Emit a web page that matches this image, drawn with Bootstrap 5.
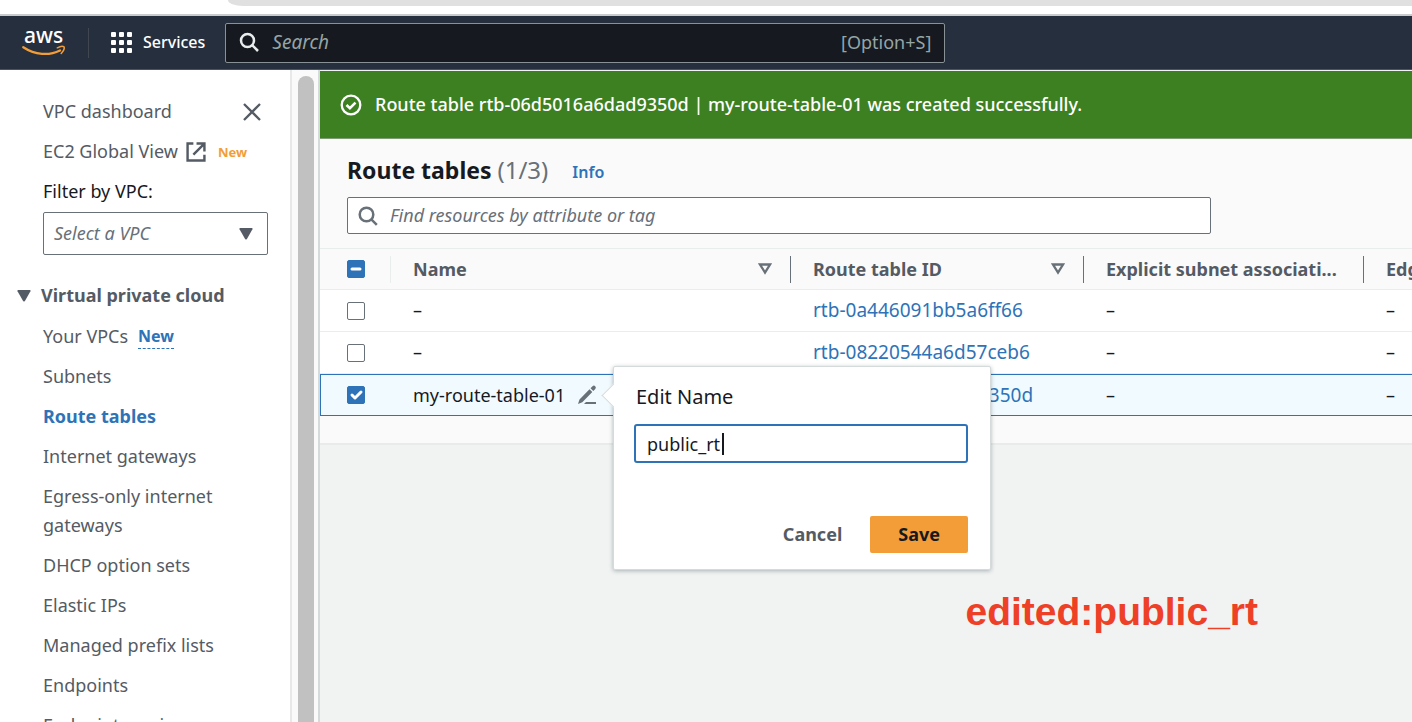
<!DOCTYPE html>
<html lang="en">
<head>
<meta charset="utf-8">
<meta name="viewport" content="width=device-width, initial-scale=1">
<title>Route tables | VPC Console</title>
<link href="https://cdn.jsdelivr.net/npm/bootstrap@5.3.0/dist/css/bootstrap.min.css" rel="stylesheet">
<style>
  :root {
    --ink: #16191f;
    --slate: #545b64;
    --muted: #687078;
    --link: #2e73b8;
    --line: #eaeded;
    --pale: #fafafa;
  }
  body { font-family: "Noto Sans", "Open Sans", sans-serif; font-size: 18px; line-height: 29px; color: var(--ink); background: #fff; }
  a { text-decoration: none; color: var(--link); }
  svg { flex: none; display: block; }
  ::placeholder { font-style: italic; }

  /* Browser toolbar above the page */
  .browser-strip { height: 16px; border-bottom: 2px solid #c9cbcd; padding-left: 228px; }
  .address-bar { height: 6px; background: #e0e0e0; border-bottom-left-radius: 20px 8px; }

  /* Console header */
  .console-nav { height: 54px; background: #252f3e; border-bottom: 1px solid #4a545f; padding: 0 22px; }
  .nav-rule { width: 1px; height: 30px; background: #414750; margin: 0 22px; }
  .services-btn { font-size: 16px; font-weight: 500; color: #fff; gap: 10px; }
  .global-search { width: 720px; height: 40px; margin-left: 20px; padding: 0 13px; background: #16191f; border: 1px solid #879196; border-radius: 2px; }
  .global-search input { font-size: 19px; color: #fff; margin-left: 12px; }
  .global-search input::placeholder { color: #95a5a6; opacity: 1; }
  .global-search .hint { color: #95a5a6; }
  .bare-input { border: 0; outline: 0; background: transparent; padding: 0; min-width: 0; }

  /* Side navigation */
  .side-nav { width: 292px; border-right: 2px solid #e7e8e8; padding: 27px 22px 0 43px; }
  .side-nav a, .side-nav .group-title { color: var(--slate); }
  .side-nav .side-links { display: flex; flex-direction: column; gap: 11px; }
  .side-nav a.current { color: var(--link); font-weight: 700; }
  .new-tag { font-size: 13px; font-weight: 700; line-height: 27px; color: #f29d38; margin-left: 12px; padding-top: 2px; }
  .close-btn { margin-right: 6px; }
  .side-nav a.new-link { font-size: 16px; font-weight: 700; line-height: 24px; color: var(--link); border-bottom: 1px dashed var(--link); margin-left: 10px; }
  .vpc-field { margin-top: 6px; }
  .vpc-select { height: 43px; font-style: italic; color: var(--muted); border: 1px solid var(--muted); border-radius: 2px; padding: 0 10px; background: #fff; appearance: none; }
  .select-arrow { position: absolute; right: 15px; top: 16px; pointer-events: none; }
  .group-title { font-weight: 700; margin: 26px 0 12px -26px; gap: 10px; }

  .scroll-track { width: 28px; background: var(--pale); border-right: 2px solid #d5dbdb; padding: 6px 4px 0 6px; }
  .scroll-thumb { height: 100%; background: #c1c1c1; border-radius: 8px 8px 0 0; }

  /* Main pane */
  .main-pane { background: #f1f3f3; padding-top: 1px; }
  .flash { height: 68px; background: #3d8022; color: #fff; font-weight: 500; padding: 0 20px; gap: 13px; border-bottom: 1px solid #7d9c74; }
  .table-panel { background: var(--pale); padding-bottom: 27px; border-bottom: 2px solid #e9ebeb; }
  .panel-head { padding: 16px 27px 14px; }
  .panel-head h1 { font-size: 23px; font-weight: 700; line-height: 30px; margin: 0; }
  .panel-head h1 span { font-size: 24px; line-height: 26px; font-weight: 400; color: var(--muted); }
  .info-link { font-size: 16px; font-weight: 600; margin-left: 24px; padding-top: 4px; }
  .title-row { height: 30px; }
  .resource-search { max-width: 864px; height: 37px; margin-top: 12px; padding: 0 10px; gap: 12px; background: #fff; border: 1px solid var(--muted); border-radius: 2px; }
  .resource-search ::placeholder { color: var(--muted); opacity: 1; }

  .route-table { width: 1371px; table-layout: fixed; border-collapse: separate; border-spacing: 0; }
  .route-table th { height: 42px; padding: 0; border-top: 1px solid var(--line); border-bottom: 1px solid var(--line); color: var(--slate); font-weight: 700; }
  .route-table td { height: 42px; padding: 0 22px; background: #fff; border-bottom: 1px solid var(--line); font-size: 18px; }
  .route-table td:first-child, .route-table th:first-child { padding-left: 27px; }
  .col-head { height: 27px; padding: 0 18px 0 22px; border-right: 1px solid var(--muted); }
  .col-head.faint { border-color: var(--line); }
  .route-table .picked td { height: 42px; background: #f1faff; border-top: 1px solid var(--link); border-bottom: 1px solid var(--link); }
  .route-table .picked td:first-child { border-left: 1px solid var(--link); padding-left: 26px; }
  .route-table td.id-cell { font-size: 19px; }
  .tick { width: 18px; height: 18px; margin: 0; border: 1px solid var(--muted); display: block; }
  .tick.form-check-input { border-radius: 2px; }
  .tick.form-check-input:checked, .tick.form-check-input:indeterminate { background-color: var(--link); border-color: var(--link); background-size: 20px 20px; }

  /* Inline edit popover */
  .name-cell { gap: 12px; }
  .edit-pop { left: 222px; top: -9px; width: 378px; height: 204px; padding: 16px 22px 16px 20px; background: #fff; border: 1px solid #d5dbdb; border-radius: 2px; box-shadow: 0 1px 4px rgba(0, 28, 36, .3); z-index: 2; }
  .edit-pop::before { content: ""; position: absolute; left: -9px; top: 20px; width: 17px; height: 17px; background: #fff; border: solid #d5dbdb; border-width: 0 0 1px 1px; transform: rotate(45deg); }
  .edit-pop label { font-size: 20px; line-height: 28px; padding-left: 2px; }
  .name-field { margin-top: 13px; }
  .name-input { height: 39px; padding: 0 11px; border: 2px solid var(--link); border-radius: 3px; outline: 0; color: var(--ink); font-size: 18px; }
  .text-caret { left: 88px; top: 9px; width: 2px; height: 22px; background: var(--ink); }
  .pop-btn { height: 37px; font-weight: 700; border: 0; border-radius: 2px; padding: 0 28px; background: transparent; color: var(--slate); }
  .pop-btn.save { background: #f29d38; color: var(--ink); }

  .annotation { font: 700 39px/46px "Liberation Sans", Arial, sans-serif; color: #ee4027; margin: 144px 154px 0 0; text-align: right; }
</style>
<script src="https://cdn.jsdelivr.net/npm/bootstrap@5.3.0/dist/js/bootstrap.bundle.min.js"></script>
</head>
<body class="vh-100 overflow-hidden d-flex flex-column">

<div class="browser-strip flex-shrink-0"><div class="address-bar"></div></div>

<header class="console-nav d-flex align-items-center flex-shrink-0">
  <a href="#" aria-label="AWS home">
    <svg width="44" height="30" viewBox="0 0 44 30">
      <text x="2" y="15" font-family="Noto Sans" font-size="21" font-weight="500" fill="#fff">aws</text>
      <path d="M1.300 19.200C13 27 27 28 38 22.400" fill="none" stroke="#f29d38" stroke-width="2.300" stroke-linecap="round"/>
      <path d="M35.300 19.800C38 18.300 41 18 42 18.800C42.600 20 41.500 23 39.200 25.400" fill="none" stroke="#f29d38" stroke-width="1.500" stroke-linecap="round"/>
    </svg>
  </a>
  <div class="nav-rule"></div>
  <button type="button" class="services-btn bare-input d-flex align-items-center">
    <svg width="22" height="22" viewBox="0 0 22 22" fill="#fff">
      <rect x="0" y="0" width="5" height="5" rx="1"/><rect x="8" y="0" width="5" height="5" rx="1"/><rect x="16" y="0" width="5" height="5" rx="1"/>
      <rect x="0" y="8" width="5" height="5" rx="1"/><rect x="8" y="8" width="5" height="5" rx="1"/><rect x="16" y="8" width="5" height="5" rx="1"/>
      <rect x="0" y="16" width="5" height="5" rx="1"/><rect x="8" y="16" width="5" height="5" rx="1"/><rect x="16" y="16" width="5" height="5" rx="1"/>
    </svg>
    Services
  </button>
  <div class="global-search d-flex align-items-center">
    <svg width="21" height="21" viewBox="0 0 21 21" fill="none" stroke="#eaeded" stroke-width="2.500"><circle cx="8.500" cy="8.500" r="6.500"/><path d="M13.200 13.200L19 19"/></svg>
    <input class="bare-input flex-grow-1" type="search" placeholder="Search" aria-label="Search">
    <span class="hint">[Option+S]</span>
  </div>
</header>

<div class="d-flex flex-grow-1 overflow-hidden">
  <nav class="side-nav flex-shrink-0" aria-label="VPC">
    <div class="side-links">
      <div class="d-flex align-items-center justify-content-between">
        <a href="#">VPC dashboard</a>
        <button type="button" class="bare-input close-btn" aria-label="Close navigation">
          <svg width="20" height="20" viewBox="0 0 20 20" stroke="#545b64" stroke-width="2.300"><path d="M2 2L18 18M18 2L2 18"/></svg>
        </button>
      </div>
      <div class="d-flex align-items-center">
        <a href="#" class="d-flex align-items-center">EC2 Global View
          <svg class="ms-2" width="20" height="20" viewBox="0 0 19 19" fill="none" stroke="#545b64" stroke-width="2.300"><path d="M7 1.500H1.500V17.500H17.500V12M10 1.500H17.500V9M17 2L7 12"/></svg>
        </a>
        <span class="new-tag">New</span>
      </div>
      <label for="vpc">Filter by VPC:</label>
    </div>
    <div class="position-relative vpc-field">
      <select id="vpc" class="vpc-select w-100"><option>Select a VPC</option></select>
      <svg class="select-arrow" width="14" height="12" viewBox="0 0 13 11" fill="#545b64"><path d="M1 0H12Q13 0 12.500 1L7.500 10Q6.500 11.500 5.500 10L.5 1Q0 0 1 0Z"/></svg>
    </div>
    <div class="group-title d-flex align-items-center">
      <svg width="14" height="12" viewBox="0 0 13 11" fill="#545b64"><path d="M1 0H12Q13 0 12.500 1L7.500 10Q6.500 11.500 5.500 10L.5 1Q0 0 1 0Z"/></svg>
      Virtual private cloud
    </div>
    <div class="side-links">
      <div class="d-flex align-items-center"><a href="#">Your VPCs</a><a href="#" class="new-link">New</a></div>
      <a href="#">Subnets</a>
      <a href="#" class="current" aria-current="page">Route tables</a>
      <a href="#">Internet gateways</a>
      <a href="#">Egress-only internet gateways</a>
      <a href="#">DHCP option sets</a>
      <a href="#">Elastic IPs</a>
      <a href="#">Managed prefix lists</a>
      <a href="#">Endpoints</a>
      <a href="#">Endpoint services</a>
    </div>
  </nav>
  <div class="scroll-track flex-shrink-0"><div class="scroll-thumb"></div></div>

  <main class="main-pane flex-grow-1 overflow-hidden">
    <div class="flash d-flex align-items-center" role="status">
      <svg width="22" height="22" viewBox="0 0 22 22" fill="none" stroke="#fff" stroke-width="2.300"><circle cx="11" cy="11" r="9.300"/><path d="M6.500 11L9.900 14.200L15.500 8.600" stroke-width="2.600"/></svg>
      Route table rtb-06d5016a6dad9350d | my-route-table-01 was created successfully.
    </div>

    <section class="table-panel">
      <div class="panel-head">
        <div class="title-row d-flex align-items-center">
          <h1>Route tables <span>(1/3)</span></h1>
          <a href="#" class="info-link">Info</a>
        </div>
        <div class="resource-search d-flex align-items-center">
          <svg width="20" height="20" viewBox="0 0 20 20" fill="none" stroke="#687078" stroke-width="2.500"><circle cx="8.500" cy="8.500" r="6.800"/><path d="M13.300 13.300L18.800 18.800"/></svg>
          <input class="bare-input flex-grow-1" type="search" placeholder="Find resources by attribute or tag" aria-label="Find resources">
        </div>
      </div>

      <table class="route-table">
        <colgroup><col style="width:71px"><col style="width:400px"><col style="width:293px"><col style="width:280px"><col></colgroup>
        <thead>
          <tr>
            <th><div class="col-head faint d-flex align-items-center p-0"><input id="all" class="form-check-input tick" type="checkbox" aria-label="Select all"></div></th>
            <th><div class="col-head d-flex align-items-center justify-content-between">Name
              <svg width="14" height="12" viewBox="0 0 14 12" fill="none" stroke="#687078" stroke-width="2.300"><path d="M2 1.500H12L7 9.500Z"/></svg></div></th>
            <th><div class="col-head d-flex align-items-center justify-content-between">Route table ID
              <svg width="14" height="12" viewBox="0 0 14 12" fill="none" stroke="#687078" stroke-width="2.300"><path d="M2 1.500H12L7 9.500Z"/></svg></div></th>
            <th><div class="col-head d-flex align-items-center text-nowrap">Explicit subnet associati...</div></th>
            <th><div class="col-head d-flex align-items-center text-nowrap">Edge associations</div></th>
          </tr>
        </thead>
        <tbody>
          <tr>
            <td><input class="form-check-input tick" type="checkbox" aria-label="Select rtb-0a446091bb5a6ff66"></td>
            <td>–</td><td class="id-cell"><a href="#">rtb-0a446091bb5a6ff66</a></td><td>–</td><td>–</td>
          </tr>
          <tr>
            <td><input class="form-check-input tick" type="checkbox" aria-label="Select rtb-08220544a6d57ceb6"></td>
            <td>–</td><td class="id-cell"><a href="#">rtb-08220544a6d57ceb6</a></td><td>–</td><td>–</td>
          </tr>
          <tr class="picked">
            <td><input class="form-check-input tick" type="checkbox" checked aria-label="Select my-route-table-01"></td>
            <td class="position-relative">
              <div class="name-cell d-flex align-items-center">
                my-route-table-01
                <button type="button" class="bare-input" aria-label="Edit name">
                  <svg width="20" height="20" viewBox="0 0 20 20" fill="#687078"><path d="M1 19L2.500 14.500L12.500 4.300L15.300 7.100L5.300 17.300ZM13.500 3.300L15.500 1.200Q17 0 18.200 1.300Q19.500 2.500 18.300 4L16.300 6.100ZM9 17H19V19H7Z"/></svg>
                </button>
              </div>
              <form class="edit-pop position-absolute d-flex flex-column">
                <label for="edit-name">Edit Name</label>
                <div class="position-relative name-field">
                  <input id="edit-name" class="name-input w-100" type="text" value="public_rt">
                  <span class="text-caret position-absolute"></span>
                </div>
                <div class="d-flex justify-content-end mt-auto">
                  <button type="button" class="pop-btn">Cancel</button>
                  <button type="submit" class="pop-btn save">Save</button>
                </div>
              </form>
            </td>
            <td class="id-cell"><a href="#">rtb-06d5016a6dad9350d</a></td><td>–</td><td>–</td>
          </tr>
        </tbody>
      </table>
    </section>

    <p class="annotation">edited:public_rt</p>
  </main>
</div>
<script>document.getElementById("all").indeterminate = true;</script>
</body>
</html>
